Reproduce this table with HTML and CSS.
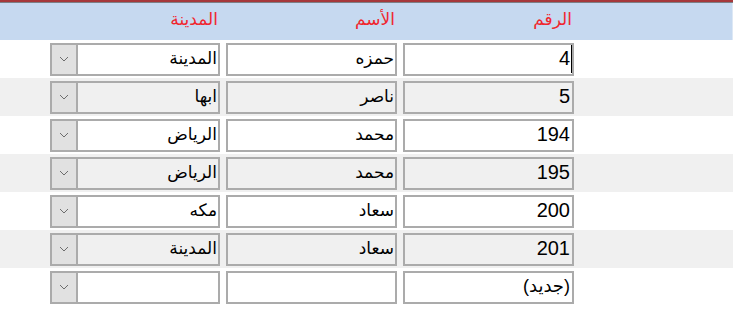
FILE: index.html
```html
<!DOCTYPE html>
<html lang="ar" dir="rtl">
<head>
    <meta charset="UTF-8">
    <title>المدن</title>
    <link rel="stylesheet" href="styles.css">
</head>
<body>
    <!-- Column captions -->
    <div class="header">
        <div class="row">
            <div class="cell caption">الرقم</div>
            <div class="cell caption">الأسم</div>
            <div class="cell caption city">المدينة</div>
        </div>
    </div>

    <!-- Records -->
    <div class="records">
        <div class="row">
            <div class="cell box num">4<span class="caret"></span></div>
            <div class="cell box">حمزه</div>
            <div class="cell box combo"><span class="value">المدينة</span><span class="drop"><svg width="10" height="6" viewBox="0 0 10 6"><polyline points="1,1 5,5 9,1" fill="none" stroke="#6d6d6d" stroke-width="1"/></svg></span></div>
        </div>
        <div class="row">
            <div class="cell box num">5</div>
            <div class="cell box">ناصر</div>
            <div class="cell box combo"><span class="value">ابها</span><span class="drop"><svg width="10" height="6" viewBox="0 0 10 6"><polyline points="1,1 5,5 9,1" fill="none" stroke="#6d6d6d" stroke-width="1"/></svg></span></div>
        </div>
        <div class="row">
            <div class="cell box num">194</div>
            <div class="cell box">محمد</div>
            <div class="cell box combo"><span class="value">الرياض</span><span class="drop"><svg width="10" height="6" viewBox="0 0 10 6"><polyline points="1,1 5,5 9,1" fill="none" stroke="#6d6d6d" stroke-width="1"/></svg></span></div>
        </div>
        <div class="row">
            <div class="cell box num">195</div>
            <div class="cell box">محمد</div>
            <div class="cell box combo"><span class="value">الرياض</span><span class="drop"><svg width="10" height="6" viewBox="0 0 10 6"><polyline points="1,1 5,5 9,1" fill="none" stroke="#6d6d6d" stroke-width="1"/></svg></span></div>
        </div>
        <div class="row">
            <div class="cell box num">200</div>
            <div class="cell box">سعاد</div>
            <div class="cell box combo"><span class="value">مكه</span><span class="drop"><svg width="10" height="6" viewBox="0 0 10 6"><polyline points="1,1 5,5 9,1" fill="none" stroke="#6d6d6d" stroke-width="1"/></svg></span></div>
        </div>
        <div class="row">
            <div class="cell box num">201</div>
            <div class="cell box">سعاد</div>
            <div class="cell box combo"><span class="value">المدينة</span><span class="drop"><svg width="10" height="6" viewBox="0 0 10 6"><polyline points="1,1 5,5 9,1" fill="none" stroke="#6d6d6d" stroke-width="1"/></svg></span></div>
        </div>
        <!-- new record row -->
        <div class="row">
            <div class="cell box num new">(جديد)</div>
            <div class="cell box"></div>
            <div class="cell box combo"><span class="value"></span><span class="drop"><svg width="10" height="6" viewBox="0 0 10 6"><polyline points="1,1 5,5 9,1" fill="none" stroke="#6d6d6d" stroke-width="1"/></svg></span></div>
        </div>
    </div>
</body>
</html>
```

FILE: styles.css
```css
/* continuous form, one record per row */
body {
    margin: 0;
    background: #fff;
    font-family: "Liberation Sans", "DejaVu Sans", sans-serif;
    color: #000;
}

.row {
    display: flex;
    gap: 6px;
    padding-right: 159px;
}

.cell {
    width: 171px;
    box-sizing: border-box;
}

.cell.city,
.cell.combo {
    width: 170px;
}

/* header band */
.header {
    border-top: 2px solid #a6383b;
    box-shadow: inset 0 1px 0 #7d7f86, inset -1px 0 0 #dde8f5;
    background: #c6d9f0;
    height: 38px;
}

.header .row {
    height: 100%;
}

.caption {
    color: #f0262e;
    font-size: 17px;
    padding: 3px 2px 0 0;
    line-height: 30px;
}

/* records */
.records .row {
    height: 38px;
    align-items: center;
}

.records .row:nth-child(even) {
    background: #f0f0f0;
}

.box {
    position: relative;
    height: 33px;
    border: 2px solid #ababab;
    font-size: 17px;
    line-height: 27px;
    padding-right: 1px;
    white-space: nowrap;
    overflow: hidden;
}

.box.num {
    font-size: 20px;
    padding-right: 2px;
}

.box.new {
    font-size: 18px;
}

.caret {
    position: absolute;
    right: 0;
    top: 0;
    width: 1px;
    height: 28px;
    background: #000;
}

/* combo box with its drop button on the left */
.combo {
    display: flex;
    padding-right: 1px;
}

.combo .value {
    flex: 1;
}

.combo .drop {
    width: 24px;
    background: #e1e1e1;
    border-right: 2px solid #ababab;
    display: flex;
    align-items: center;
    justify-content: center;
}
```
